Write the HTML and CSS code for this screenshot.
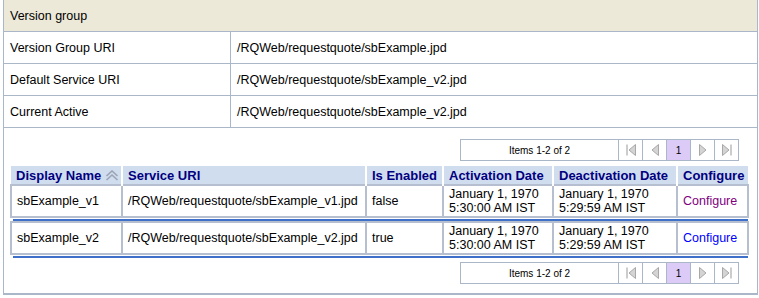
FILE: index.html
```html
<!DOCTYPE html>
<html lang="en">
<head>
<meta charset="UTF-8">
<title>Version group</title>
<link rel="stylesheet" href="styles.css">
</head>
<body>
<div class="panel">
  <table class="props">
    <tr class="title"><td colspan="2">Version group</td></tr>
    <tr><td class="key">Version Group URI</td><td>/RQWeb/requestquote/sbExample.jpd</td></tr>
    <tr><td class="key">Default Service URI</td><td>/RQWeb/requestquote/sbExample_v2.jpd</td></tr>
    <tr><td class="key">Current Active</td><td>/RQWeb/requestquote/sbExample_v2.jpd</td></tr>
  </table>

  <div class="body">
    <div class="pager-row">
      <div class="pager">
        <div class="count">Items 1-2 of 2</div>
        <div class="pbtn"><svg width="14" height="14" viewBox="0 0 14 14"><rect x="2.5" y="1.5" width="1" height="11" fill="#9a9a9a"/><path d="M11.5 1.5 L5 7 L11.5 12.5 Z" fill="#d4d4d4" stroke="#a8a8a8"/></svg></div>
        <div class="pbtn"><svg width="14" height="14" viewBox="0 0 14 14"><path d="M10.5 1.5 L4 7 L10.5 12.5 Z" fill="#d4d4d4" stroke="#a8a8a8"/></svg></div>
        <div class="pbtn current">1</div>
        <div class="pbtn"><svg width="14" height="14" viewBox="0 0 14 14"><path d="M3.5 1.5 L10 7 L3.5 12.5 Z" fill="#d4d4d4" stroke="#a8a8a8"/></svg></div>
        <div class="pbtn"><svg width="14" height="14" viewBox="0 0 14 14"><path d="M2.5 1.5 L9 7 L2.5 12.5 Z" fill="#d4d4d4" stroke="#a8a8a8"/><rect x="10.5" y="1.5" width="1" height="11" fill="#9a9a9a"/></svg></div>
      </div>
    </div>

    <table class="list">
      <thead>
        <tr>
          <th class="c1">Display Name <svg class="sort" width="14" height="11" viewBox="0 0 14 11"><path d="M1.5 6 L7 1 L12.5 6 M1.5 10 L7 5 L12.5 10" fill="none" stroke="#9aa4b4" stroke-width="1.6"/></svg></th>
          <th class="c2">Service URI</th>
          <th class="c3">Is Enabled</th>
          <th class="c4">Activation Date</th>
          <th class="c5">Deactivation Date</th>
          <th class="c6">Configure</th>
        </tr>
      </thead>
      <tbody>
        <tr class="item">
          <td>sbExample_v1</td>
          <td>/RQWeb/requestquote/sbExample_v1.jpd</td>
          <td>false</td>
          <td>January 1, 1970<br>5:30:00 AM IST</td>
          <td>January 1, 1970<br>5:29:59 AM IST</td>
          <td class="cfg"><a href="#" class="visited">Configure</a></td>
        </tr>
        <tr class="sep"><td colspan="6"><div class="line"></div></td></tr>
        <tr class="item">
          <td>sbExample_v2</td>
          <td>/RQWeb/requestquote/sbExample_v2.jpd</td>
          <td>true</td>
          <td>January 1, 1970<br>5:30:00 AM IST</td>
          <td>January 1, 1970<br>5:29:59 AM IST</td>
          <td class="cfg"><a href="#">Configure</a></td>
        </tr>
        <tr class="sep"><td colspan="6"><div class="line"></div></td></tr>
      </tbody>
    </table>

    <div class="pager-row bottom">
      <div class="pager">
        <div class="count">Items 1-2 of 2</div>
        <div class="pbtn"><svg width="14" height="14" viewBox="0 0 14 14"><rect x="2.5" y="1.5" width="1" height="11" fill="#9a9a9a"/><path d="M11.5 1.5 L5 7 L11.5 12.5 Z" fill="#d4d4d4" stroke="#a8a8a8"/></svg></div>
        <div class="pbtn"><svg width="14" height="14" viewBox="0 0 14 14"><path d="M10.5 1.5 L4 7 L10.5 12.5 Z" fill="#d4d4d4" stroke="#a8a8a8"/></svg></div>
        <div class="pbtn current">1</div>
        <div class="pbtn"><svg width="14" height="14" viewBox="0 0 14 14"><path d="M3.5 1.5 L10 7 L3.5 12.5 Z" fill="#d4d4d4" stroke="#a8a8a8"/></svg></div>
        <div class="pbtn"><svg width="14" height="14" viewBox="0 0 14 14"><path d="M2.5 1.5 L9 7 L2.5 12.5 Z" fill="#d4d4d4" stroke="#a8a8a8"/><rect x="10.5" y="1.5" width="1" height="11" fill="#9a9a9a"/></svg></div>
      </div>
    </div>
  </div>
</div>
</body>
</html>
```

FILE: styles.css
```css
body {
  margin: 0;
  background: #fff;
  font-family: 'Liberation Sans', Arial, sans-serif;
  font-size: 12.5px;
  color: #000;
}

.panel {
  margin: 0 1px 0 3px;
  border: 1px solid #a9b7c9;
  border-top: none;
  border-bottom-width: 2px;
  height: 295px;
  box-sizing: border-box;
}

/* top property table */
.props {
  width: 100%;
  border-collapse: collapse;
}

.props td {
  height: 31px;
  padding: 0 0 0 6px;
  border-bottom: 1px solid #a9b7c9;
}

.props .title td {
  background-color: #ece9d8;
}

.props .key {
  width: 220px;
  border-right: 1px solid #a9b7c9;
}

.body {
  padding: 11px 6px 0 6px;
}

/* pager */
.pager-row {
  display: flex;
  justify-content: flex-end;
  padding-right: 12px;
}

.pager-row.bottom {
  margin-top: 4px;
}

.pager {
  display: flex;
  border: 1px solid #a9b7c9;
  height: 20px;
  font-size: 10px;
}

.count {
  width: 157px;
  display: flex;
  align-items: center;
  justify-content: center;
  border-right: 1px solid #a9b7c9;
}

.pbtn {
  width: 23px;
  display: flex;
  align-items: center;
  justify-content: center;
  border-right: 1px solid #a9b7c9;
}

.pbtn:last-child {
  border-right: none;
}

.pbtn.current {
  background-color: #dccbf6;
}

/* list table */
.list {
  width: 739px;
  margin-top: 5px;
  border-collapse: collapse;
  table-layout: fixed;
}

.list th {
  box-sizing: border-box;
  background-color: #d0ddef;
  color: #000080;
  font-size: 13px;
  font-weight: bold;
  text-align: left;
  height: 19px;
  padding: 0 0 0 5px;
  border-right: 2px solid #fff;
  white-space: nowrap;
  overflow: hidden;
}

.list th:last-child {
  border-right: none;
}

.list .c1 { width: 111px; }
.list .c2 { width: 244px; }
.list .c3 { width: 77px; }
.list .c4 { width: 110px; }
.list .c5 { width: 124px; }

.sort {
  vertical-align: -1px;
}

.list .item td {
  border: 2px solid #b5bfcf;
  height: 30px;
  padding: 0 0 0 5px;
  line-height: 14px;
  white-space: nowrap;
}

.list .sep td {
  padding: 1px 0 0 2px;
}

.line {
  height: 2px;
  background-color: #3f70c9;
}

a {
  color: #0000ff;
  text-decoration: none;
}

a.visited {
  color: #800080;
}
```
